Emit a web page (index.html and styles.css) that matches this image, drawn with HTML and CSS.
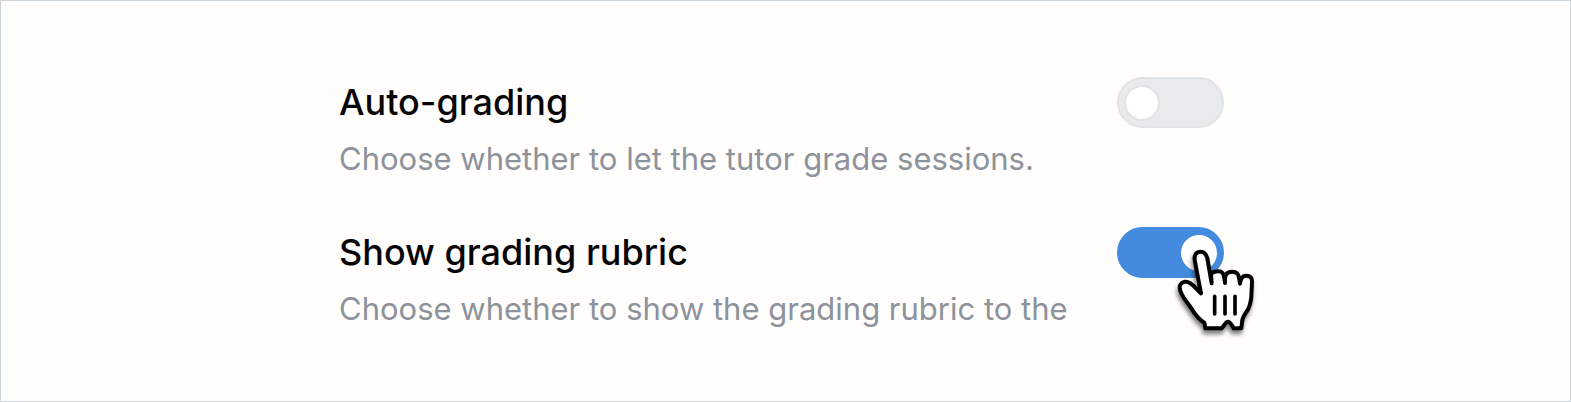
FILE: index.html
```html
<!DOCTYPE html>
<html lang="en">
<head>
    <meta charset="UTF-8">
    <meta name="viewport" content="width=device-width, initial-scale=1.0">
    <title>Grading settings</title>
    <link rel="stylesheet" href="styles.css">
</head>
<body>
    <main class="panel">
        <form class="settings">
            <div class="setting">
                <div class="setting-text">
                    <label for="auto-grading">Auto-grading</label>
                    <p id="auto-grading-info">Choose whether to let the tutor grade sessions.</p>
                </div>
                <div class="switch-wrap">
                    <input type="checkbox" role="switch" class="switch" id="auto-grading" aria-describedby="auto-grading-info">
                </div>
            </div>
            <div class="setting">
                <div class="setting-text">
                    <label for="show-rubric">Show grading rubric</label>
                    <p id="show-rubric-info">Choose whether to show the grading rubric to the</p>
                </div>
                <div class="switch-wrap">
                    <input type="checkbox" role="switch" class="switch" id="show-rubric" aria-describedby="show-rubric-info" checked>
                    <svg class="pointer" viewBox="0 0 270 300" aria-hidden="true">
                        <path class="hand" d="M93 160 L75 65 C71 46 78 35 91 35 C103 35 109 43 112 55 L125 130 L123 103 C129 92 153 90 159 101 C164 109 164 120 165 129 C165 118 164 110 168 104 C176 92 198 93 204 104 C208 111 208 122 210 131 C211 119 214 107 229 107 C240 107 246 113 246 124 L244 171 C242 187 240 201 231 213 C222 225 216 235 216 248 L214 265 L191 265 C186 257 181 245 174 245 C166 245 163 257 155 265 L106 265 L103 248 C84 237 75 223 64 205 C52 187 43 179 35 162 C30 152 27 142 31 134 C37 124 50 123 60 129 C74 138 82 151 93 160 Z"/>
                        <path class="lines" d="M134 169V222M165 169V222M195 169V222"/>
                    </svg>
                </div>
            </div>
        </form>
    </main>
</body>
</html>
```
FILE: styles.css
```css
* {
    box-sizing: border-box;
}
body {
    margin: 0;
    min-height: 100vh;
    display: flex;
    background-color: #fffefd;
    color: #050505;
    font-family: Inter, 'Liberation Sans', sans-serif;
}
.panel {
    flex: 1;
    padding: 76px 24px 64px 16px;
    border: 1px solid #ccd4da;
}
.settings {
    display: flex;
    flex-direction: column;
    gap: 46px;
    max-width: 885px;
    margin: 0 auto;
}
.setting {
    display: flex;
    justify-content: space-between;
    align-items: flex-start;
    gap: 40px;
}
.setting-text {
    display: flex;
    flex-direction: column;
    gap: 10px;
}
.setting-text label {
    font-size: 36px;
    line-height: 50px;
    font-weight: 500;
    cursor: pointer;
}
.setting-text p {
    margin: 0;
    font-size: 31px;
    line-height: 44px;
    color: #8d929b;
}
.switch-wrap {
    position: relative;
    flex: none;
    display: flex;
}
.switch {
    appearance: none;
    display: flex;
    align-items: center;
    width: 107px;
    height: 51px;
    margin: 0;
    padding: 0 5px;
    border: 2px solid #e2e3e4;
    border-radius: 26px;
    background: #e9eaec;
    cursor: pointer;
}
.switch::before {
    content: "";
    box-sizing: border-box;
    width: 36px;
    height: 36px;
    border: 2px solid #e2e3e4;
    border-radius: 50%;
    background: #fff;
}
.switch:checked {
    justify-content: flex-end;
    border-color: #448adf;
    background: #448adf;
}
.switch:checked::before {
    border-color: #fff;
}
.pointer {
    position: absolute;
    top: 13px;
    left: 53px;
    width: 90px;
    height: 100px;
    pointer-events: none;
    filter: drop-shadow(-1px 4px 2px rgba(0,0,0,0.5));
}
.hand {
    fill: #fff;
    stroke: #000;
    stroke-width: 12;
    stroke-linejoin: round;
}
.lines {
    fill: none;
    stroke: #000;
    stroke-width: 11;
    stroke-linecap: round;
}
```
